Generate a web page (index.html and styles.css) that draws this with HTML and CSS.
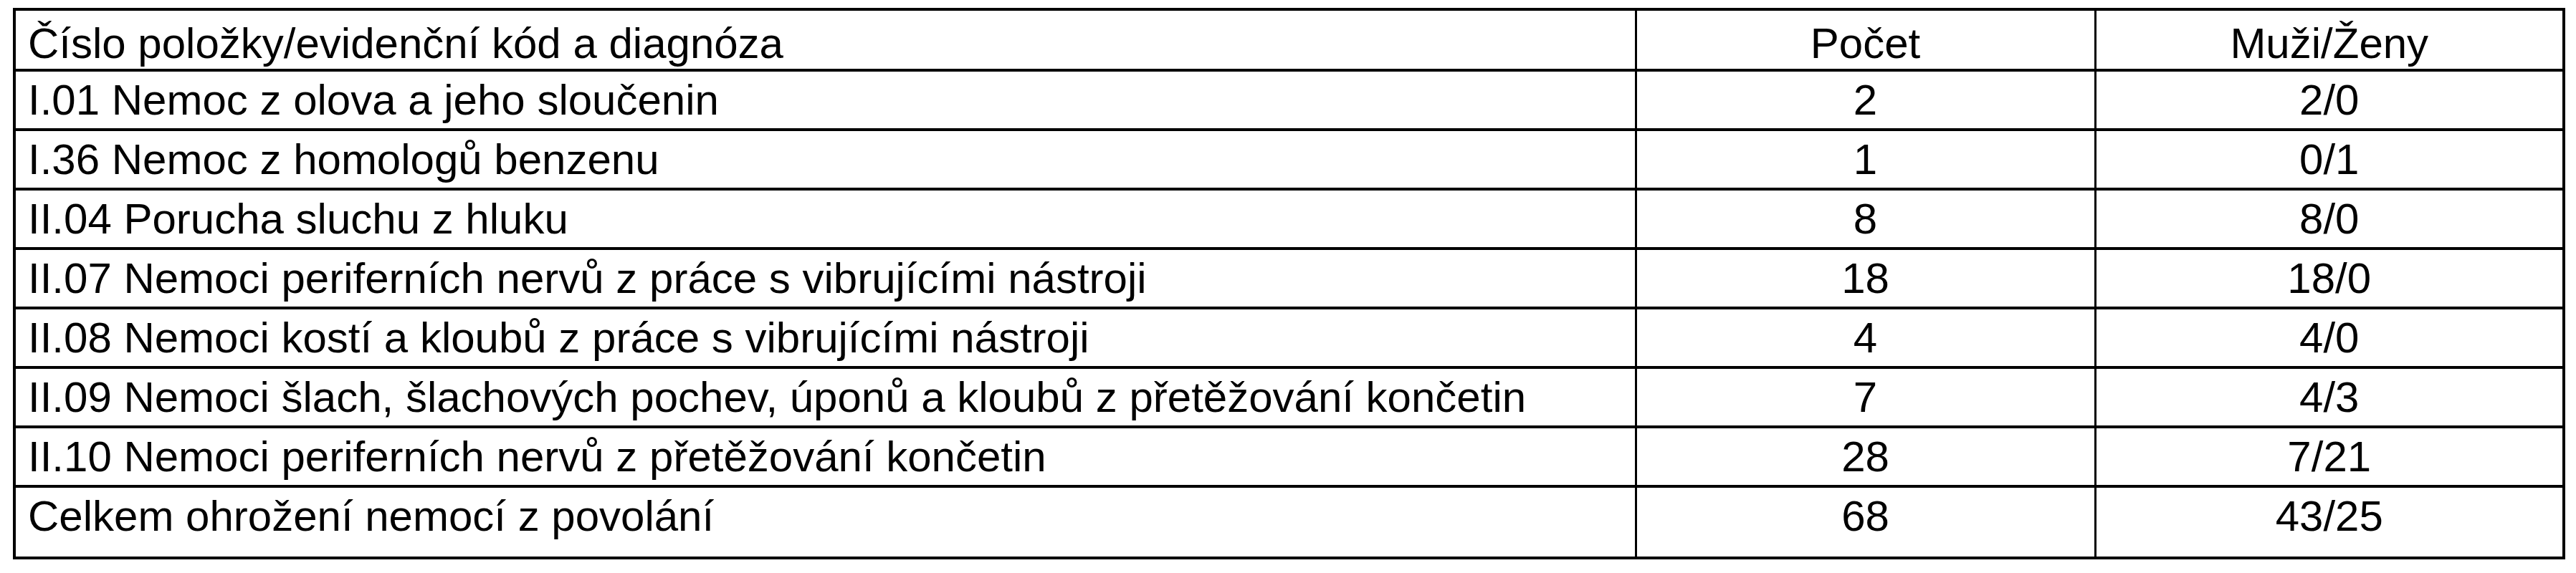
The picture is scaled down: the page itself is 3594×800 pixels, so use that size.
FILE: index.html
```html
<!DOCTYPE html>
<html lang="cs">
<head>
<meta charset="utf-8">
<title>Nemoci z povolání</title>
<link rel="stylesheet" href="styles.css">
</head>
<body>
<div class="page">
<table class="stats">
  <colgroup>
    <col class="c-name">
    <col class="c-count">
    <col class="c-sex">
  </colgroup>
  <thead>
    <tr class="head">
      <th class="name">Číslo položky/evidenční kód a diagnóza</th>
      <th class="num">Počet</th>
      <th class="num">Muži/Ženy</th>
    </tr>
  </thead>
  <tbody>
    <tr><td class="name">I.01 Nemoc z olova a jeho sloučenin</td><td class="num">2</td><td class="num">2/0</td></tr>
    <tr><td class="name">I.36 Nemoc z homologů benzenu</td><td class="num">1</td><td class="num">0/1</td></tr>
    <tr><td class="name">II.04 Porucha sluchu z hluku</td><td class="num">8</td><td class="num">8/0</td></tr>
    <tr><td class="name">II.07 Nemoci periferních nervů z práce s vibrujícími nástroji</td><td class="num">18</td><td class="num">18/0</td></tr>
    <tr><td class="name">II.08 Nemoci kostí a kloubů z práce s vibrujícími nástroji</td><td class="num">4</td><td class="num">4/0</td></tr>
    <tr><td class="name">II.09 Nemoci šlach, šlachových pochev, úponů a kloubů z přetěžování končetin</td><td class="num">7</td><td class="num">4/3</td></tr>
    <tr><td class="name">II.10 Nemoci periferních nervů z přetěžování končetin</td><td class="num">28</td><td class="num">7/21</td></tr>
    <tr class="total"><td class="name">Celkem ohrožení nemocí z povolání</td><td class="num">68</td><td class="num">43/25</td></tr>
  </tbody>
</table>
</div>
</body>
</html>
```
FILE: styles.css
```css
html, body {
  margin: 0;
  padding: 0;
  background: #ffffff;
}

.page {
  padding: 11px 0 0 18px;
}

.stats {
  border-collapse: collapse;
  width: 3557px;
  table-layout: fixed;
  font-family: "Liberation Sans", Arial, sans-serif;
  font-size: 60px;
  line-height: 70px;
  color: #000000;
  border: 4px solid #000000;
}

.c-name { width: 2262px; }
.c-count { width: 641px; }
.c-sex { width: 654px; }

.stats th,
.stats td {
  font-weight: normal;
  border-top: 4px solid #000000;
  border-bottom: 4px solid #000000;
  border-left: 3px solid #000000;
  border-right: 3px solid #000000;
  vertical-align: top;
  padding: 5px 0 0 0;
  white-space: nowrap;
}

.stats .name {
  text-align: left;
  padding-left: 17px;
  border-left: 4px solid #000000;
}

.stats .num {
  text-align: center;
}

.stats tr:last-child td:last-child,
.stats .head th:last-child {
  border-right: 4px solid #000000;
}

.head th {
  height: 83px;
  box-sizing: border-box;
  padding-top: 11px;
}

.stats tbody tr td {
  height: 83px;
  box-sizing: border-box;
}

.stats tbody tr.total td {
  height: 100px;
}
```
